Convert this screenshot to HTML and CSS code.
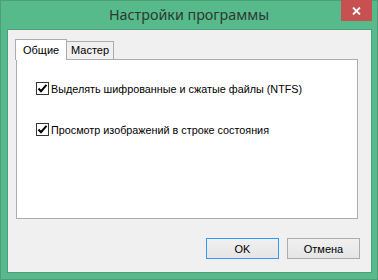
FILE: index.html
```html
<!DOCTYPE html>
<html lang="ru">

<head>
    <meta charset="UTF-8">
    <title>Настройки программы</title>
    <link rel="stylesheet" href="styles.css">
</head>

<body>
    <div class="window">
        <div class="titlebar">
            <span></span>
            <h1 class="title">Настройки программы</h1>
            <button class="close" aria-label="Закрыть">
                <svg width="9" height="8" viewBox="0 0 9 8">
                    <path d="M1 0.5 L8 7.5 M8 0.5 L1 7.5" stroke="#fff" stroke-width="1.8" fill="none" />
                </svg>
            </button>
        </div>

        <div class="client">
            <div class="tabs">
                <div class="tab active">Общие</div>
                <div class="tab">Мастер</div>
            </div>

            <div class="panel">
                <label class="option">
                    <span class="check">
                        <svg width="11" height="11" viewBox="0 0 11 11">
                            <path d="M1.5 5.5 L4 8.2 L9.5 1.8" stroke="#000" stroke-width="2" fill="none" />
                        </svg>
                    </span>
                    Выделять шифрованные и сжатые файлы (NTFS)
                </label>
                <label class="option">
                    <span class="check">
                        <svg width="11" height="11" viewBox="0 0 11 11">
                            <path d="M1.5 5.5 L4 8.2 L9.5 1.8" stroke="#000" stroke-width="2" fill="none" />
                        </svg>
                    </span>
                    Просмотр изображений в строке состояния
                </label>
            </div>

            <div class="buttons">
                <button class="btn default">OK</button>
                <button class="btn">Отмена</button>
            </div>
        </div>
    </div>
</body>

</html>
```

FILE: styles.css
```css
* {
    box-sizing: border-box;
    margin: 0;
}

body {
    font-family: 'Liberation Sans', Arial, sans-serif;
    font-size: 11px;
    color: #000;
}

.window {
    width: 378px;
    height: 280px;
    background: #57ba8a;
    border: 1px solid #4c9f78;
    display: flex;
    flex-direction: column;
}

.titlebar {
    height: 28px;
    display: grid;
    grid-template-columns: 1fr auto 1fr;
    align-items: start;
}

.title {
    font-family: 'Noto Sans', sans-serif;
    font-size: 14.3px;
    font-weight: 400;
    color: #2e3833;
    line-height: 20px;
    padding-top: 4px;
}

.close {
    justify-self: end;
    width: 31px;
    height: 21px;
    margin-top: -1px;
    margin-right: 5px;
    border: none;
    background: #c75050;
    display: flex;
    align-items: center;
    justify-content: center;
    padding: 0;
}

.client {
    flex: 1 1 0%;
    margin: 0 5px 6px 6px;
    background: #f0f0f0;
    border: 1px solid #4c9f78;
    display: flex;
    flex-direction: column;
}

.tabs {
    display: flex;
    align-items: flex-end;
    margin: 9px 0 0 7px;
}

.tab {
    background: #f0f0f0;
    border: 1px solid #acacac;
    border-left: none;
    border-bottom: none;
    height: 18px;
    padding: 2px 4px 0 4px;
}

.tab.active {
    position: relative;
    background: #fff;
    border-left: 1px solid #acacac;
    height: 21px;
    margin-bottom: -1px;
    padding: 4px 8px 0 7px;
    width: 52px;
}

.panel {
    margin-left: 8px;
    width: 342px;
    height: 160px;
    background: #fff;
    border: 1px solid #acacac;
    padding: 22px 0 0 19px;
    display: flex;
    flex-direction: column;
    gap: 28px;
    font-size: 10.8px;
}

.option {
    display: flex;
    align-items: center;
    gap: 2px;
    height: 13px;
}

.check {
    width: 13px;
    height: 13px;
    border: 1px solid #333;
    background: #fff;
    display: flex;
    align-items: center;
    justify-content: center;
}

.buttons {
    display: flex;
    justify-content: flex-end;
    gap: 8px;
    margin: 19px 11px 0 0;
}

.btn {
    width: 73px;
    height: 21px;
    font-family: 'Liberation Sans', Arial, sans-serif;
    font-size: 11px;
    color: #000;
    border: 1px solid #acacac;
    background: linear-gradient(#f0f0f0, #e5e5e5);
    padding: 0;
}

.btn.default {
    border-color: #3399ff;
}
```
